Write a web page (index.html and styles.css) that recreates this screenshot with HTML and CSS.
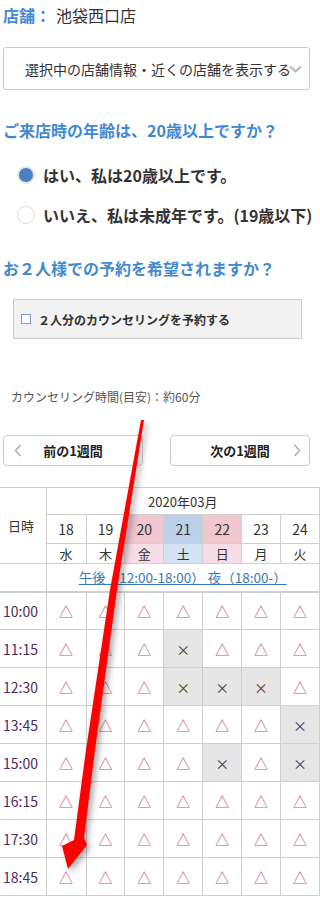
FILE: index.html
```html
<!DOCTYPE html>
<html lang="ja">
<head>
    <meta charset="UTF-8">
    <meta name="viewport" content="width=device-width, initial-scale=1.0">
    <title>カウンセリング予約</title>
    <link rel="stylesheet" href="styles.css">
</head>
<body>
    <div class="page">
        <div class="shop"><span class="shop-label">店舗：</span>池袋西口店</div>

        <!-- 店舗情報の切り替え -->
        <div class="select">
            選択中の店舗情報・近くの店舗を表示する
            <svg class="select-arrow" width="13" height="8" viewBox="0 0 13 8"><path d="M1 1.5 L6.5 6.5 L12 1.5" fill="none" stroke="#b5b5b5" stroke-width="2"/></svg>
        </div>

        <h2 class="q">ご来店時の年齢は、20歳以上ですか？</h2>
        <label class="radio"><span class="dot on"></span>はい、私は20歳以上です。</label>
        <label class="radio"><span class="dot"></span>いいえ、私は未成年です。(19歳以下)</label>

        <h2 class="q q-pair">お２人様での予約を希望されますか？</h2>
        <div class="pair"><span class="box"></span>２人分のカウンセリングを予約する</div>

        <p class="duration">カウンセリング時間(目安)：約60分</p>

        <!-- 週の切り替え -->
        <div class="weeks">
            <a class="week">
                <svg class="week-arrow left" width="8" height="13" viewBox="0 0 8 13"><path d="M6.5 1 L1.5 6.5 L6.5 12" fill="none" stroke="#b0b0b0" stroke-width="1.6"/></svg>
                前の1週間
            </a>
            <a class="week">
                次の1週間
                <svg class="week-arrow right" width="8" height="13" viewBox="0 0 8 13"><path d="M1.5 1 L6.5 6.5 L1.5 12" fill="none" stroke="#b0b0b0" stroke-width="1.6"/></svg>
            </a>
        </div>
    </div>

    <table class="cal">
        <colgroup>
            <col class="c-time"><col class="c-first"><col><col><col><col><col><col>
        </colgroup>
        <tr class="r-month">
            <td class="head-date" rowspan="3">日時</td>
            <td colspan="7">2020年03月</td>
        </tr>
        <tr class="r-day">
            <td>18</td><td>19</td><td class="hol">20</td><td class="sat">21</td><td class="hol">22</td><td>23</td><td>24</td>
        </tr>
        <tr class="r-week">
            <td>水</td><td>木</td><td class="hol">金</td><td class="sat">土</td><td class="hol">日</td><td>月</td><td>火</td>
        </tr>
        <tr class="r-link">
            <td></td>
            <td colspan="7"><a href="#">午後（12:00-18:00） </a> <a href="#">夜（18:00-） </a></td>
        </tr>
        <tr class="slot r-first">
            <td class="time">10:00</td><td>△</td><td>△</td><td>△</td><td>△</td><td>△</td><td>△</td><td>△</td>
        </tr>
        <tr class="slot">
            <td class="time">11:15</td><td>△</td><td>△</td><td>△</td><td class="full">×</td><td>△</td><td>△</td><td>△</td>
        </tr>
        <tr class="slot">
            <td class="time">12:30</td><td>△</td><td>△</td><td>△</td><td class="full">×</td><td class="full">×</td><td class="full">×</td><td>△</td>
        </tr>
        <tr class="slot">
            <td class="time">13:45</td><td>△</td><td>△</td><td>△</td><td>△</td><td>△</td><td>△</td><td class="full">×</td>
        </tr>
        <tr class="slot">
            <td class="time">15:00</td><td>△</td><td>△</td><td>△</td><td>△</td><td class="full">×</td><td>△</td><td class="full">×</td>
        </tr>
        <tr class="slot">
            <td class="time">16:15</td><td>△</td><td>△</td><td>△</td><td>△</td><td>△</td><td>△</td><td>△</td>
        </tr>
        <tr class="slot">
            <td class="time">17:30</td><td>△</td><td>△</td><td>△</td><td>△</td><td>△</td><td>△</td><td>△</td>
        </tr>
        <tr class="slot">
            <td class="time">18:45</td><td>△</td><td>△</td><td>△</td><td>△</td><td>△</td><td>△</td><td>△</td>
        </tr>
    </table>

    <!-- 注釈の赤い矢印 -->
    <svg class="arrow" width="320" height="900" viewBox="0 0 320 900">
        <polygon points="141,420 144,420 117,590 95,750 84,838 87,845 68,869 62,846 74,840 86,750 110,590" fill="#ff0000"/>
    </svg>
</body>
</html>
```

FILE: styles.css
```css
body {
    margin: 0;
    width: 320px;
    overflow-x: hidden;
    position: relative;
    font-family: "Noto Sans CJK JP", "Noto Sans", sans-serif;
    color: #333;
}
.page {
    padding: 0 10px 0 3px;
}
.shop {
    padding-top: 5px;
    font-size: 16px;
    line-height: 20px;
    white-space: nowrap;
}
.shop-label {
    color: #4389d1;
    font-weight: bold;
    margin-right: 5px;
}
.select {
    position: relative;
    margin-top: 22px;
    height: 43px;
    box-sizing: border-box;
    border: 1px solid #ccc;
    border-radius: 3px;
    padding-left: 21px;
    display: flex;
    align-items: center;
    font-size: 14px;
    white-space: nowrap;
}
.select-arrow {
    position: absolute;
    right: 7px;
    top: 17px;
}
.q {
    margin: 29px 0 0;
    font-size: 16px;
    line-height: 22px;
    color: #4389d1;
    font-weight: bold;
    white-space: nowrap;
}
.q-pair {
    margin-top: 31px;
}
.radio {
    display: flex;
    align-items: center;
    margin-top: 23px;
    padding-left: 14px;
    font-size: 16px;
    line-height: 22px;
    font-weight: bold;
    white-space: nowrap;
}
.radio + .radio {
    margin-top: 18px;
}
.dot {
    width: 18px;
    height: 18px;
    flex: none;
    box-sizing: border-box;
    border: 1px solid #ddd;
    border-radius: 50%;
    background: #fff;
    margin-right: 8px;
}
.dot.on {
    background: #4a80c0;
    border: 2px solid #e4e4e4;
}
.pair {
    margin: 20px 8px 0 10px;
    height: 40px;
    box-sizing: border-box;
    border: 1px solid #ccc;
    background: #f2f2f2;
    display: flex;
    align-items: center;
    padding-left: 7px;
    font-size: 12px;
    font-weight: bold;
    white-space: nowrap;
}
.box {
    width: 8px;
    height: 8px;
    border: 1px solid #7f9cc8;
    background: #fff;
    margin-right: 7px;
}
.duration {
    margin: 49px 0 0;
    padding-left: 8px;
    font-size: 12px;
    line-height: 18px;
    color: #555;
}
.weeks {
    display: flex;
    justify-content: space-between;
    margin-top: 29px;
}
.week {
    position: relative;
    width: 140px;
    height: 31px;
    box-sizing: border-box;
    border: 1px solid #ccc;
    border-radius: 4px;
    display: flex;
    align-items: center;
    justify-content: center;
    font-size: 13px;
    font-weight: bold;
    color: #222;
}
.week-arrow {
    position: absolute;
    top: 8px;
}
.week-arrow.left {
    left: 10px;
}
.week-arrow.right {
    right: 8px;
}
.cal {
    margin-top: 21px;
    width: 320px;
    table-layout: fixed;
    border-collapse: collapse;
    font-size: 13px;
    color: #333;
}
.cal td {
    border: 1px solid #d0d0d0;
    text-align: center;
    padding: 0;
}
.cal tr > td:first-child {
    border-left: none;
}
.c-time {
    width: 46px;
}
.c-first {
    width: 40px;
}
.head-date {
    text-align: left !important;
    padding-left: 8px !important;
}
.r-month {
    height: 27px;
}
.r-day {
    height: 29px;
    font-size: 14px;
}
.r-week {
    height: 20px;
}
.r-link {
    height: 28px;
}
.r-link td {
    border-bottom: 2px solid #d0d0d0;
    font-size: 13.5px;
}
.r-link a {
    color: #3b78b8;
    text-decoration: underline;
}
.r-day .hol {
    background: #f0c6cf;
}
.r-week .hol {
    background: #f6dce5;
}
.r-day .sat {
    background: #bcd1e9;
}
.r-week .sat {
    background: #d3e3f3;
}
.slot {
    height: 38px;
}
.slot td {
    color: #c8506e;
    font-size: 14px;
}
.slot .time {
    text-align: left;
    padding-left: 3px;
    color: #4c2c5c;
    font-size: 14px;
}
.slot .full {
    background: #e6e6e6;
    color: #444;
}
.arrow {
    position: absolute;
    top: 0;
    left: 0;
    pointer-events: none;
    filter: drop-shadow(3px 3px 3px rgba(0, 0, 0, 0.35));
}
```
